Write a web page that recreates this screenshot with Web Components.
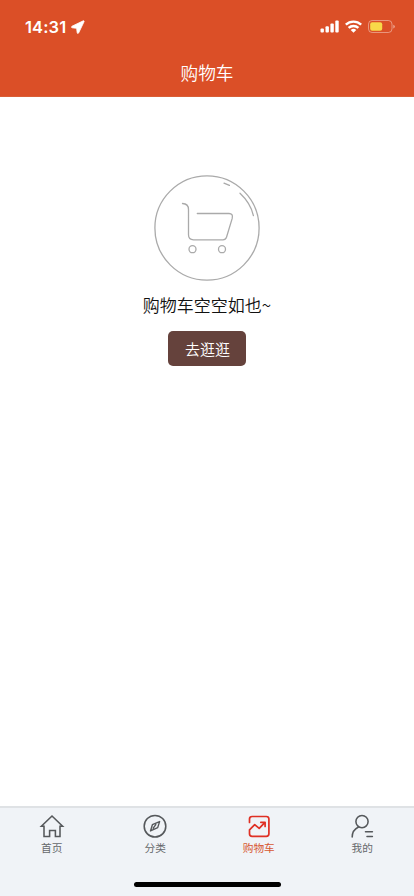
<!DOCTYPE html>
<html lang="zh-CN">
<head>
<meta charset="utf-8">
<meta name="viewport" content="width=device-width,initial-scale=1">
<title>购物车</title>
<style>
html,body{margin:0;height:100%;overflow:hidden}
body{font-family:"Noto Sans CJK SC",sans-serif;background:#fff}
</style>
</head>
<body>
<cart-page></cart-page>
<script>
const define = (name, html) => customElements.define(name, class extends HTMLElement {
  constructor() {
    super();
    this.attachShadow({mode: 'open'}).innerHTML = html;
  }
});

define('status-bar', `<style>
:host{display:flex;height:50px;box-sizing:border-box;padding:14px 19px 0 25px;justify-content:space-between;color:#fff}
.left,.right{display:flex;height:25px;align-items:center}
time{font:600 16.5px/25px Inter,sans-serif;width:43px;white-space:nowrap;letter-spacing:.1px;padding-top:1px}
svg{display:block}
</style>
<div class="left"><time>14:31</time>
<svg width="14" height="14" viewBox="0 0 14 14" style="margin-left:3px"><path d="M12.3.8 1 6.2c-.8.5-.6 1.5.3 1.6l3.4.4q.9.1 1 .9l.5 3.6c.1.9 1 1 1.4.3L13.1 1.6c.2-.5-.2-1-.8-.8z" fill="#fff" stroke="#fff" stroke-width=".8"/></svg></div>
<div class="right">
<svg width="19" height="13" viewBox="0 0 19 13" fill="#fff"><rect x=".5" y="8.5" width="3.4" height="4" rx="1"/><rect x="5.5" y="6.2" width="3.4" height="6.3" rx="1"/><rect x="10.4" y="3.5" width="3.4" height="9" rx="1"/><rect x="15.3" y=".5" width="3.4" height="12" rx="1"/></svg>
<svg width="17" height="13" viewBox="0 0 17 13" fill="none" stroke="#fff" stroke-width="2.4" style="margin-left:6px"><path d="M.8 4.7a11.1 11.1 0 0 1 15.4 0M3.6 7.9a7.1 7.1 0 0 1 9.8 0"/><path d="M8.5 12.8 5.7 10a4.1 4.1 0 0 1 5.6 0z" fill="#fff" stroke="none"/></svg>
<svg width="27" height="13" viewBox="0 0 27 13" style="margin-left:6px"><rect x=".5" y=".5" width="23.5" height="12" rx="3.6" fill="none" stroke="#fff" stroke-opacity=".4"/><rect x="2.2" y="2.2" width="12" height="8.6" rx="2" fill="#f8d949"/><path d="M25.3 4.8q1.5.4 1.5 1.8t-1.5 1.8z" fill="#fff" fill-opacity=".5"/></svg>
</div>`);

define('nav-header', `<style>
:host{display:block;height:97px;box-sizing:border-box;background:#db4f27;border-bottom:1px solid #d95e36;color:#fff}
h1{margin:0;height:46px;text-align:center;font-size:17.7px;line-height:44px;font-weight:350}
</style><status-bar></status-bar><h1><slot></slot></h1>`);

define('empty-cart', `<style>
:host{display:flex;flex:1;flex-direction:column;align-items:center;padding-top:78px;background:#fff}
svg{display:block}
p{margin:9px 0 0;font-size:17px;line-height:30px;color:#111;font-weight:350;white-space:nowrap}
button{margin:11px 0 0;border:0;padding:0 0 0 1px;width:78px;height:35px;border-radius:5px;background:#65423c;color:#fff;font:350 15px/34px "Noto Sans CJK SC",sans-serif}
</style>
<svg width="106" height="106" viewBox="0 0 106 106" fill="none" stroke="#aaa" stroke-width="1.3" stroke-linecap="round">
<circle cx="53" cy="53" r="52.1"/>
<path d="M28.5 28.5q6 .2 6 6v25.3q0 5 5 5H69q2.6 0 3.5-2.6l5.7-18.8q1.1-4.9-3.2-4.9H43.3"/>
<circle cx="38.5" cy="74.2" r="3.5"/><circle cx="68" cy="74.2" r="3.5"/>
<path d="M70 8.2l5.4 2.2M86 18.3Q96.7 28.3 99.4 40.6"/></svg>
<p><slot></slot></p><button type="button"><slot name="action"></slot></button>`);

define('tab-item', `<style>
:host{display:flex;flex:1;flex-direction:column;align-items:center;color:#65686b;font-size:10.7px;line-height:16px}
span{margin-top:1px}
::slotted(svg){display:block;width:26px;height:26px;fill:none;stroke:#55585b;stroke-width:1.55;stroke-linecap:round;stroke-linejoin:round}
:host([active]){color:#d75732}
:host([active]) ::slotted(svg){stroke:#df3024}
</style><slot name="icon"></slot><span><slot></slot></span>`);

define('tab-bar', `<style>
:host{display:flex;flex-direction:column;height:90px;box-sizing:border-box;border-top:2px solid #dfe2e5;background:#f0f3f7}
nav{display:flex;padding-top:5px;flex:1}
i{display:block;width:147px;height:5px;border-radius:3px;background:#000;margin:0 auto 9px}
</style><nav>
<tab-item><svg slot="icon" viewBox="0 0 26 26"><path d="M5 13.2H2.4L13 3l10.6 10.2H21v10.2h-4.6v-6H10.6v6H5z" stroke-linejoin="miter"/></svg>首页</tab-item>
<tab-item><svg slot="icon" viewBox="0 0 26 26"><circle cx="13" cy="13.2" r="10.8"/><path d="M17.6 8.6l-1.9 6-7.2 3.3 1.9-6.2zM11.2 15.2l2.6-3.6" stroke-width="1.4"/></svg>分类</tab-item>
<tab-item active><svg slot="icon" viewBox="0 0 26 26"><path d="M3.5 9.5V6Q3.5 3.5 6.1 3.5h14.2q2.6 0 2.6 2.6v14.6q0 2.6-2.6 2.6H6.1q-2.6 0-2.6-2.6v-3.8l5.2-5.3 4.5 3.8 5.5-5.7M14.8 9.3h4.3v4.2" stroke-width="1.7"/></svg>购物车</tab-item>
<tab-item><svg slot="icon" viewBox="0 0 26 26"><circle cx="13" cy="8.6" r="6.1"/><path d="M3.2 24q0-6.9 6.3-10M16.5 18.8h6.9M18 23.5h5.4"/></svg>我的</tab-item>
</nav><i></i>`);

define('cart-page', `<style>
:host{display:flex;flex-direction:column;width:414px;height:896px;overflow:hidden}
</style><nav-header>购物车</nav-header>
<empty-cart>购物车空空如也~<span slot="action">去逛逛</span></empty-cart>
<tab-bar></tab-bar>`);
</script>
</body>
</html>
